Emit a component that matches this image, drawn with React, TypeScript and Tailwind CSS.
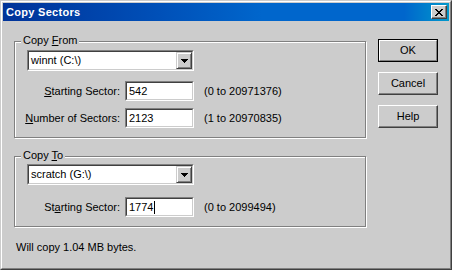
const sunkenOuter = "border border-t-[#808080] border-l-[#808080] border-r-white border-b-white"
const sunkenInner = "border border-t-[#404040] border-l-[#404040] border-r-[#cccccc] border-b-[#cccccc] bg-white"

function Combo({ value }: { value: string }) {
  return (
    <div className={`flex h-[21px] w-[167px] ${sunkenOuter}`}>
      <div className={`flex flex-1 ${sunkenInner}`}>
        <span className="flex-1 pl-[2px] leading-[17px]">{value}</span>
        <div className="flex w-[16px] items-center justify-center border border-t-[#cccccc] border-l-[#cccccc] border-r-[#404040] border-b-[#404040] bg-[#cccccc] shadow-[inset_1px_1px_0_#fff,inset_-1px_-1px_0_#808080]">
          <svg width="7" height="4" viewBox="0 0 7 4" shapeRendering="crispEdges">
            <path d="M0 0h7v1h-1v1h-1v1h-1v1h-1v-1h-1v-1h-1v-1h-1z" fill="#000" />
          </svg>
        </div>
      </div>
    </div>
  )
}

function Field({ value, caret }: { value: string; caret?: boolean }) {
  return (
    <div className={`h-[20px] w-[69px] ${sunkenOuter}`}>
      <div className={`flex h-full items-center pl-[2px] ${sunkenInner}`}>
        <span className="leading-[14px]">{value}</span>
        {caret && <span className="ml-px inline-block h-[13px] w-px bg-black" />}
      </div>
    </div>
  )
}

function Row({ label, value, range, caret }: { label: React.ReactNode; value: string; range: string; caret?: boolean }) {
  return (
    <div className="flex items-center">
      <div className="flex w-[93px] justify-end whitespace-nowrap">{label}</div>
      <div className="ml-[5px]">
        <Field value={value} caret={caret} />
      </div>
      <div className="ml-[10px] whitespace-nowrap">{range}</div>
    </div>
  )
}

function Group({ title, children, top }: { title: React.ReactNode; children: React.ReactNode; top: string }) {
  return (
    <div className={`relative w-[352px] border border-[#808080] pr-[10px] pb-[9px] pl-[12px] shadow-[inset_1px_1px_0_#fff,1px_1px_0_#fff] ${top}`}>
      <span className="absolute top-[-8px] left-[6px] bg-[#cccccc] px-[2px] leading-[13px]">{title}</span>
      {children}
    </div>
  )
}

function Button({ label, isDefault }: { label: string; isDefault?: boolean }) {
  if (isDefault) {
    return (
      <div className="h-[23px] w-[60px] border border-black">
        <div className="flex h-full items-center justify-center border border-t-white border-l-white border-r-[#808080] border-b-[#808080]">
          {label}
        </div>
      </div>
    )
  }
  return (
    <div className="flex h-[23px] w-[60px] items-center justify-center border border-t-white border-l-white border-r-[#404040] border-b-[#404040] shadow-[inset_-1px_-1px_0_#808080]">
      {label}
    </div>
  )
}

export default function App() {
  return (
    <div className="h-[270px] w-[452px] border border-t-[#cccccc] border-l-[#cccccc] border-r-[#404040] border-b-[#404040] bg-[#cccccc] font-['Liberation_Sans',Arial,sans-serif] text-[11px] text-black">
      <div className="flex h-full flex-col border border-t-white border-l-white border-r-[#808080] border-b-[#808080] p-px">
        {/* title bar */}
        <div className="flex h-[18px] items-center bg-[linear-gradient(to_right,#003399_0%,#0050b8_35%,#0066cc_58%,#0066cc_90%,#0099cc_100%)] pr-[2px] pl-[3px]">
          <span className="flex-1 text-[11px] font-bold tracking-[0.3px] text-white">Copy Sectors</span>
          <div className="flex h-[14px] w-[16px] items-center justify-center border border-t-white border-l-white border-r-[#404040] border-b-[#404040] bg-[#cccccc] shadow-[inset_-1px_-1px_0_#808080]">
            <svg width="8" height="7" viewBox="0 0 8 7" shapeRendering="crispEdges">
              <path
                d="M0 0h2v1h1v1h2v-1h1v-1h2v1h-1v1h-1v1h-1v1h1v1h1v1h1v1h-2v-1h-1v-1h-2v1h-1v1h-2v-1h1v-1h1v-1h1v-1h-1v-1h-1v-1h-1z"
                fill="#000"
              />
            </svg>
          </div>
        </div>

        {/* body */}
        <div className="flex flex-1 pt-[18px] pl-[11px]">
          <div className="flex flex-col pt-[2px]">
            <Group title={<><span>Copy </span><span className="underline">F</span>rom</>} top="pt-[8px]">
              <Combo value="winnt (C:\)" />
              <div className="mt-[10px] flex flex-col gap-[7px]">
                <Row label={<><span className="underline">S</span>tarting Sector:</>} value="542" range="(0 to 20971376)" />
                <Row label={<><span className="underline">N</span>umber of Sectors:</>} value="2123" range="(1 to 20970835)" />
              </div>
            </Group>
            <div className="mt-[18px]">
              <Group title={<><span>Copy </span><span className="underline">T</span>o</>} top="pt-[7px]">
                <Combo value="scratch (G:\)" />
                <div className="mt-[12px]">
                  <Row label={<>St<span className="underline">a</span>rting Sector:</>} value="1774" range="(0 to 2099494)" caret />
                </div>
              </Group>
            </div>
            <div className="mt-[13px] pl-[2px] leading-[14px]">Will copy 1.04 MB bytes.</div>
          </div>

          <div className="ml-[12px] flex flex-col gap-[10px]">
            <Button label="OK" isDefault />
            <Button label="Cancel" />
            <Button label="Help" />
          </div>
        </div>
      </div>
    </div>
  )
}
